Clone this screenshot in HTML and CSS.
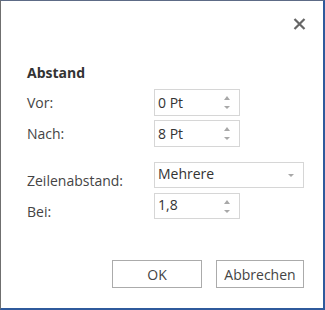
FILE: index.html
```html
<!DOCTYPE html>
<html>
<head>
<meta charset="utf-8">
<link rel="stylesheet" href="styles.css">
</head>
<body>
<div class="dialog">
  <div class="titlebar">
    <svg class="close" width="13" height="12" viewBox="0 0 13 12"><path d="M1.5 1 L11.5 11 M11.5 1 L1.5 11" stroke="#666" stroke-width="2.2" fill="none"/></svg>
  </div>
  <div class="content">
    <div class="heading">Abstand</div>
    <div class="row r1">
      <span class="label">Vor:</span>
      <div class="spin"><span class="val">0 Pt</span><span class="arrows"><i class="up"></i><i class="down"></i></span></div>
    </div>
    <div class="row r2">
      <span class="label">Nach:</span>
      <div class="spin"><span class="val">8 Pt</span><span class="arrows"><i class="up"></i><i class="down"></i></span></div>
    </div>
    <div class="row r3 low">
      <span class="label">Zeilenabstand:</span>
      <div class="select"><span class="val">Mehrere</span><i class="down"></i></div>
    </div>
    <div class="row r4 low">
      <span class="label">Bei:</span>
      <div class="spin small"><span class="val">1,8</span><span class="arrows"><i class="up"></i><i class="down"></i></span></div>
    </div>
  </div>
  <div class="buttons">
    <button class="btn ok">OK</button>
    <button class="btn cancel">Abbrechen</button>
  </div>
</div>
</body>
</html>
```
FILE: styles.css
```css
html, body { margin: 0; padding: 0; background: #fff; }
.dialog {
  width: 325px; height: 310px; box-sizing: border-box;
  border-left: 1px solid #6f6f6f;
  border-top: 1px solid #5d6b86;
  border-right: 2px solid #2f5a9c;
  border-bottom: 2px solid #2f5a9c;
  background: #fff;
  font-family: "Open Sans", "Noto Sans", sans-serif;
  font-size: 14px;
  color: #444;
}
.titlebar { height: 62px; display: flex; justify-content: flex-end; align-items: flex-start; }
.close { margin-top: 17px; margin-right: 17px; }
.content { padding-left: 26px; }
.heading { font-weight: bold; color: #333; line-height: 20px; height: 20px; margin-bottom: 6px; }
.row { display: flex; align-items: center; }
.label { width: 127px; line-height: 20px; }
.r2 { margin-top: 4px; }
.r3 { margin-top: 15px; }
.r4 { margin-top: 5px; }
.low { align-items: flex-end; }
.low .label { position: relative; top: 3px; }
.spin, .select {
  box-sizing: border-box; border: 1px solid #d6d6d6; height: 27px;
  display: flex; align-items: center; justify-content: space-between;
  padding-left: 3px; color: #333;
}
.spin { width: 86px; padding-right: 9px; }
.spin.small { height: 26px; }
.select { width: 150px; height: 26px; padding-right: 9px; }
.low .val { position: relative; top: -2px; }
.arrows { display: flex; flex-direction: column; gap: 6px; }
i { display: block; width: 0; height: 0; }
i.up { border-left: 3px solid transparent; border-right: 3px solid transparent; border-bottom: 4px solid #a8a8a8; }
i.down { border-left: 3px solid transparent; border-right: 3px solid transparent; border-top: 3px solid #a8a8a8; }
.buttons { display: flex; justify-content: flex-end; gap: 14px; padding-right: 19px; margin-top: 41px; }
.btn {
  box-sizing: border-box; height: 28px; background: #fff; border: 1px solid #ababab;
  font-family: "Open Sans", "Noto Sans", sans-serif; font-size: 14px; color: #444; padding: 0;
}
.ok { width: 90px; }
.cancel { width: 88px; }
```
